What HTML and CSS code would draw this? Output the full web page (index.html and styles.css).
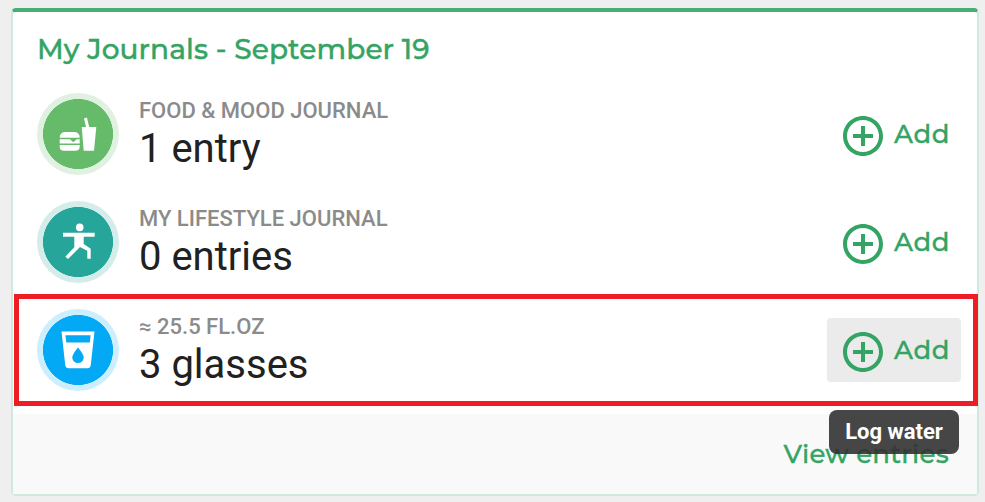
FILE: index.html
```
<!DOCTYPE html>
<html lang="en">

<head>
    <meta charset="UTF-8">
    <meta name="viewport" content="width=device-width, initial-scale=1.0">
    <title>My Journals</title>
    <link rel="stylesheet" href="styles.css">
</head>

<body>
    <main class="card">
        <h2 class="card-title">My Journals - September 19</h2>
        <ul class="journals">
            <li class="journal">
                <div class="icon food">
                    <svg viewBox="0 0 82 82">
                        <path d="M22.700 44.700q0-5.700 6-5.700h8q6 0 6 5.700zM22.700 46.300H33l3.300 2.900 3.400-2.900h3v4.200h-20zM22.700 52h20v1.700q0 4-4.500 4h-11q-4.500 0-4.500-4z" />
                        <path d="M44.700 34h4.300l-2-8.600 2.900-.9 2.300 9.500h7.100L57 57.700H46.700z" />
                    </svg>
                </div>
                <div class="info">
                    <p class="label">FOOD &amp; MOOD JOURNAL</p>
                    <p class="value">1 entry</p>
                </div>
                <button class="add">
                    <svg class="plus" viewBox="0 0 24 24"><path d="M13 7h-2v4H7v2h4v4h2v-4h4v-2h-4V7zm-1-5C6.480 2 2 6.480 2 12s4.480 10 10 10 10-4.480 10-10S17.520 2 12 2zm0 18c-4.410 0-8-3.590-8-8s3.590-8 8-8 8 3.590 8 8-3.590 8-8 8z" /></svg>
                    <span class="link">Add</span>
                </button>
            </li>
            <li class="journal">
                <div class="icon lifestyle">
                    <svg viewBox="0 0 82 82">
                        <circle cx="42.700" cy="26.400" r="3.800" />
                        <path d="M26 31.700h31.700v4h-11V43l7 4.700v10h-3.400v-8L43 46 31 58l-2.700-2.300 9-9.400V35.700H26z" />
                    </svg>
                </div>
                <div class="info">
                    <p class="label">MY LIFESTYLE JOURNAL</p>
                    <p class="value">0 entries</p>
                </div>
                <button class="add">
                    <svg class="plus" viewBox="0 0 24 24"><path d="M13 7h-2v4H7v2h4v4h2v-4h4v-2h-4V7zm-1-5C6.480 2 2 6.480 2 12s4.480 10 10 10 10-4.480 10-10S17.520 2 12 2zm0 18c-4.410 0-8-3.590-8-8s3.590-8 8-8 8 3.590 8 8-3.590 8-8 8z" /></svg>
                    <span class="link">Add</span>
                </button>
            </li>
            <li class="journal highlight">
                <div class="icon water">
                    <svg viewBox="0 0 82 82">
                        <path fill-rule="evenodd" d="M24.500 22.500h33l-3.700 33.300q-.3 3.500-3.800 3.500H32q-3.500 0-3.800-3.500zM28.500 26.200l.8 7.300h23.500l.8-7.300zM41 38.500q-5.700 6.800-5.700 10a5.700 5.500 0 0 0 11.400 0q0-3.200-5.700-10z" />
                    </svg>
                </div>
                <div class="info">
                    <p class="label">≈ 25.5 FL.OZ</p>
                    <p class="value">3 glasses</p>
                </div>
                <button class="add active">
                    <svg class="plus" viewBox="0 0 24 24"><path d="M13 7h-2v4H7v2h4v4h2v-4h4v-2h-4V7zm-1-5C6.480 2 2 6.480 2 12s4.480 10 10 10 10-4.480 10-10S17.520 2 12 2zm0 18c-4.410 0-8-3.590-8-8s3.590-8 8-8 8 3.590 8 8-3.590 8-8 8z" /></svg>
                    <span class="link">Add</span>
                    <span class="tooltip">Log water</span>
                </button>
            </li>
        </ul>
        <footer class="card-footer">
            <a class="link view">View entries</a>
        </footer>
    </main>
</body>

</html>
```
FILE: styles.css
```
* {
    box-sizing: border-box;
    margin: 0;
    padding: 0;
}

body {
    height: 502px;
    padding: 8px 6px 6px 11px;
    background-color: #efefef;
    font-family: Roboto, sans-serif;
    overflow: hidden;
}

.card {
    height: 488px;
    border: 2px solid #cfe9db;
    border-top: 4px solid #48ae74;
    border-radius: 5px;
    background-color: #fff;
}

.card-title {
    height: 68px;
    padding: 17px 0 0 24px;
    font: 500 28px/40px Montserrat, Inter, sans-serif;
    letter-spacing: 0.1px;
    color: #34a464;
    -webkit-text-stroke: 0.4px #34a464;
}

.journals {
    height: 334px;
    list-style: none;
}

.journal {
    position: relative;
    display: flex;
    align-items: center;
    height: 108px;
    padding: 0 16px 0 24px;
}

/* red frame around the current row */
.highlight::after {
    content: '';
    position: absolute;
    inset: -2px -1px -2px 1px;
    border: 5px solid #ee1c25;
    pointer-events: none;
}

.icon {
    width: 82px;
    height: 82px;
    border-radius: 50%;
}

.icon svg {
    display: block;
    fill: #fff;
}

.food {
    background: radial-gradient(circle, #66bb6a 34.7px, #e0f1e1 35.3px);
}

.lifestyle {
    background: radial-gradient(circle, #26a69a 34.7px, #d4edeb 35.3px);
}

.water {
    background: radial-gradient(circle, #03a9f4 34.7px, #cdeefd 35.3px);
}

.info {
    flex-grow: 1;
    padding: 2px 0 0 20px;
}

.label {
    font-size: 22px;
    font-weight: 500;
    line-height: 28px;
    color: #8b8b8b;
}

.value {
    font-size: 40px;
    line-height: 48px;
    color: #212121;
}

.add {
    position: relative;
    display: flex;
    align-items: center;
    width: 134px;
    height: 64px;
    padding-left: 12px;
    border: 0;
    border-radius: 4px;
    background-color: transparent;
}

.active {
    background-color: #ebebeb;
}

.plus {
    flex-shrink: 0;
    width: 48px;
    height: 48px;
    margin: 4px 7px 0 0;
    fill: #34a464;
}

.link {
    font: 500 26px/32px Montserrat, Inter, sans-serif;
    letter-spacing: 0.5px;
    color: #34a464;
    -webkit-text-stroke: 0.3px #34a464;
}

.view {
    letter-spacing: 0.25px;
}

.tooltip {
    position: absolute;
    top: 92px;
    left: 2px;
    z-index: 1;
    width: 130px;
    height: 44px;
    border-radius: 8px;
    background-color: rgba(50, 50, 50, 0.9);
    color: #fff;
    font: 700 22px/44px Roboto, sans-serif;
    text-align: center;
}

.card-footer {
    display: flex;
    align-items: center;
    justify-content: flex-end;
    height: 80px;
    padding-right: 28px;
    background-color: #f9f9f9;
}
```
